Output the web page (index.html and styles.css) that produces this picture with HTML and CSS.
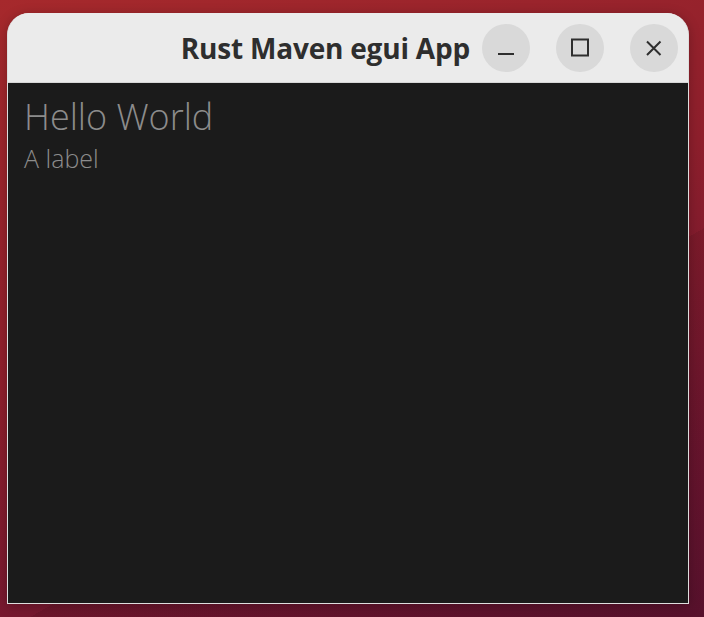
FILE: index.html
```html
<!DOCTYPE html>
<html>
<head>
<meta charset="utf-8">
<link rel="stylesheet" href="styles.css">
</head>
<body>
<div class="window">
  <header class="titlebar">
    <div class="title">Rust Maven egui App</div>
    <div class="controls">
      <button class="ctl" aria-label="Minimize">
        <svg width="20" height="20" viewBox="0 0 20 20"><rect x="2" y="15" width="16" height="2" fill="#2e2e2e"/></svg>
      </button>
      <button class="ctl" aria-label="Maximize">
        <svg width="20" height="20" viewBox="0 0 20 20"><rect x="2" y="1.5" width="16" height="16" fill="none" stroke="#2e2e2e" stroke-width="2"/></svg>
      </button>
      <button class="ctl" aria-label="Close">
        <svg width="20" height="20" viewBox="0 0 20 20"><path d="M3 3.5 L16.5 17 M16.5 3.5 L3 17" stroke="#2e2e2e" stroke-width="2" fill="none"/></svg>
      </button>
    </div>
  </header>
  <main class="content">
    <h1 class="heading">Hello World</h1>
    <p class="label">A label</p>
  </main>
</div>
</body>
</html>
```
FILE: styles.css
```css
html, body {
  margin: 0;
  height: 100%;
}
body {
  padding: 13px 0 0 7px;
  box-sizing: border-box;
  background:
    linear-gradient(150deg, transparent 0 62%, rgba(0,0,0,0.08) 62% 100%),
    linear-gradient(160deg, #a6292c 0%, #8e1f2c 45%, #6e1630 80%, #5e1230 100%);
  font-family: "Open Sans", "Noto Sans", sans-serif;
  overflow: hidden;
}
.window {
  width: 682px;
  height: 591px;
  box-sizing: border-box;
  border-radius: 22px 22px 0 0;
  background: #ebebeb;
  border: 1px solid #dedede;
  border-top: none;
  display: flex;
  flex-direction: column;
  overflow: hidden;
  box-shadow: 0 2px 12px rgba(0,0,0,0.25);
}
.titlebar {
  height: 69px;
  flex: none;
  display: flex;
  align-items: center;
  justify-content: flex-end;
  padding-right: 10px;
  border-bottom: 1px solid #d6d6d6;
  background: #ebebeb;
}
.title {
  font-weight: 700;
  font-size: 28px;
  line-height: 34px;
  color: #2e2e2e;
  letter-spacing: -0.2px;
  margin-right: 12px;
}
.controls {
  display: flex;
  gap: 26px;
}
.ctl {
  width: 48px;
  height: 48px;
  border-radius: 50%;
  border: none;
  padding: 0;
  background: #d9d9d9;
  display: flex;
  align-items: center;
  justify-content: center;
}
.ctl svg { display: block; }
.content {
  flex: 1;
  background: #1b1b1b;
  padding: 14px 16px;
  color: #8c8c8c;
}
.heading {
  margin: 0;
  font-weight: 350;
  font-size: 36px;
  line-height: 40px;
}
.label {
  margin: 6px 0 0;
  font-weight: 350;
  font-size: 25px;
  line-height: 30px;
}
```
